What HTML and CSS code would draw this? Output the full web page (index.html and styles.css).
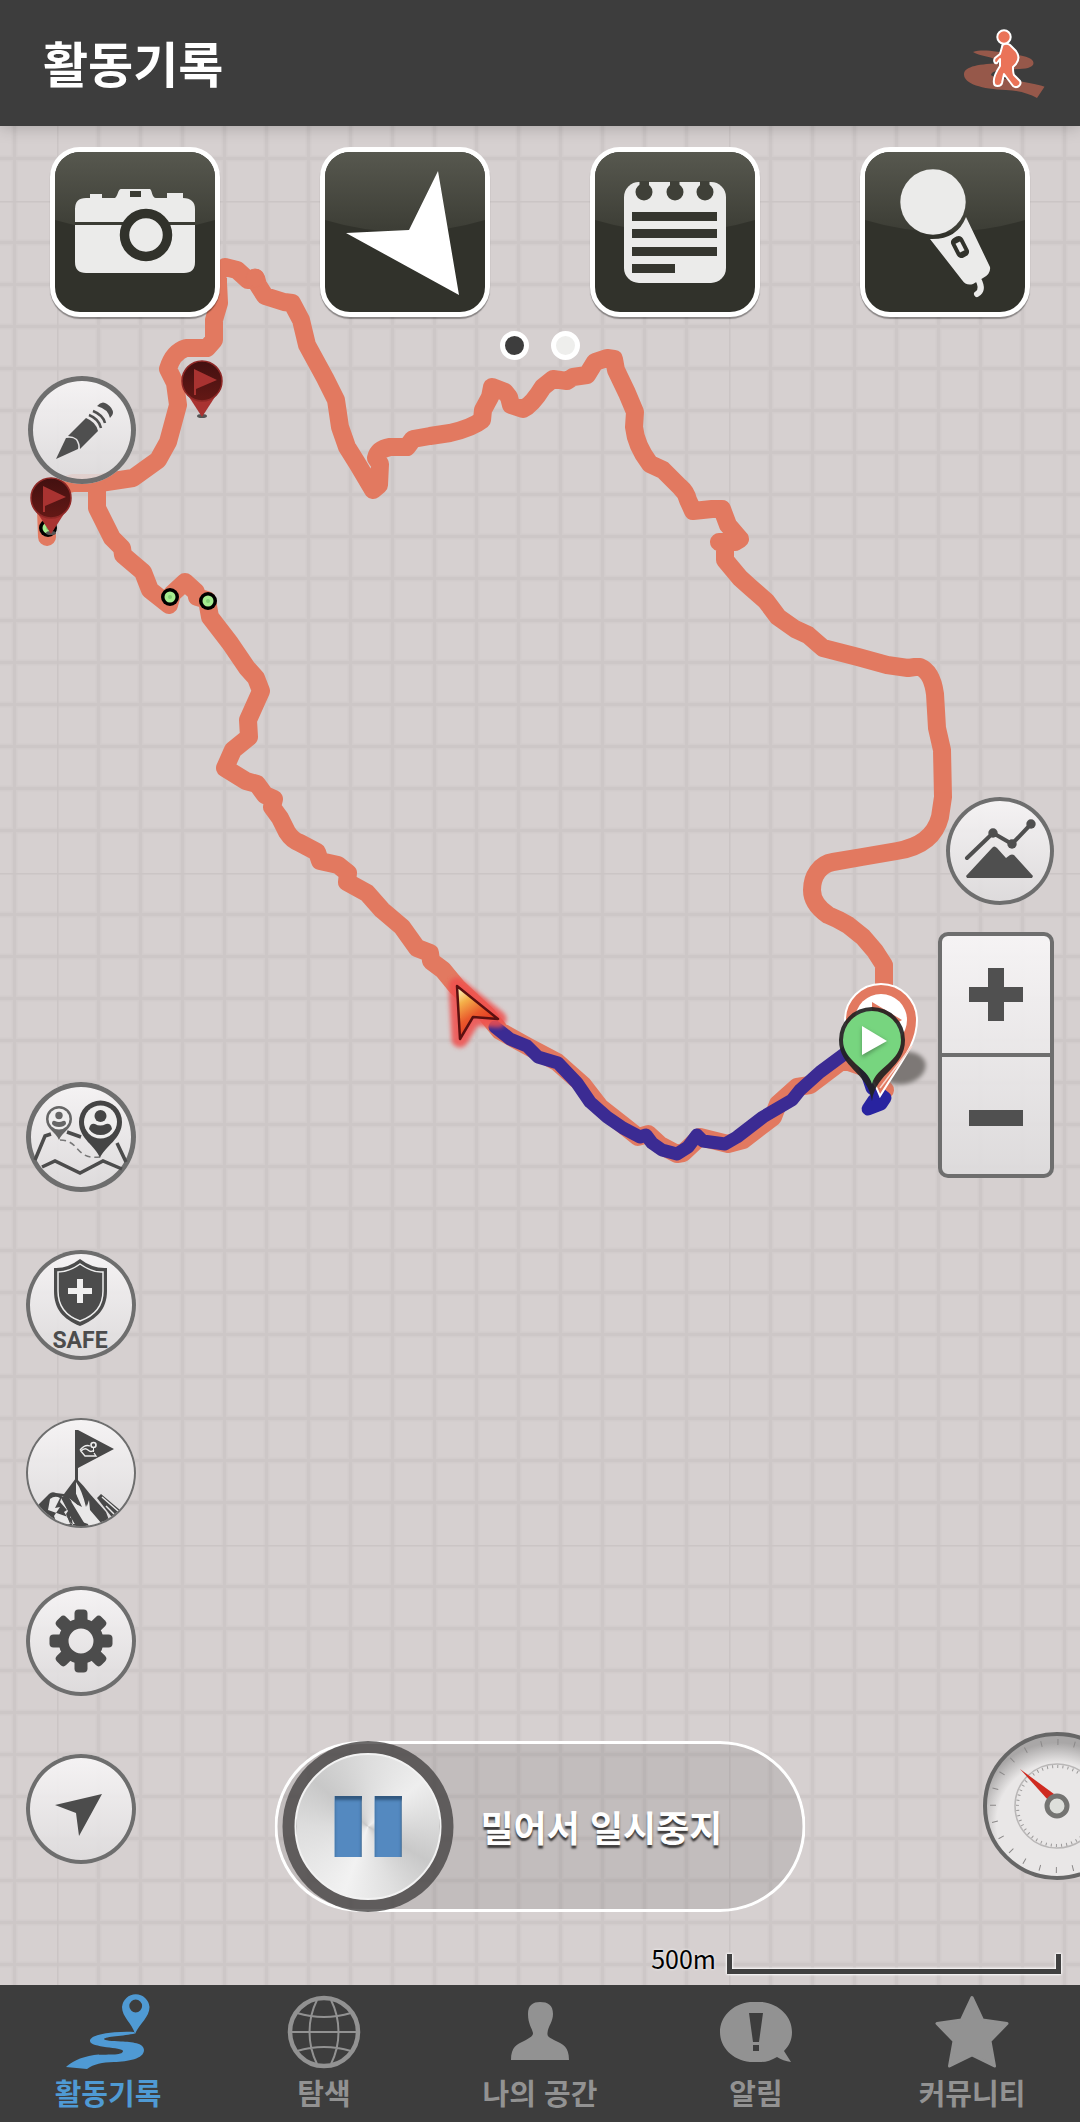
FILE: index.html
```html
<!DOCTYPE html>
<html lang="ko">
<head>
<meta charset="utf-8">
<meta name="viewport" content="width=device-width, initial-scale=1">
<title>활동기록</title>
<link rel="stylesheet" href="styles.css">
</head>
<body>
<header class="app-bar">
  <h1 class="app-title">활동기록</h1>
  <button class="activity-button" type="button" aria-label="걷기">
    <svg width="88" height="76" viewBox="0 0 88 76">
      <path fill="#96584a" d="M13 27C18 25 25 25.500 30 25.700C50 29 73.500 30 73.500 38C73.500 44 60 44.500 50 44C38 44 31 47 31 50C33 54 70 56 84.500 61.700L77 73C68 68 58 65.500 46 65C22 64 4 59 4 49.500C4 41 20 39 42 38C34 31 18 31 13 27Z"/>
      <g fill="#ea7358" stroke="#fff" stroke-width="2" stroke-linejoin="round">
        <path d="M42 22C42 18 48 18 50 20L56 26C59 30 59 35 56 39L53 42C53 45 53 48 54 50L60 56C62 60 57 64 53 61L44 49L42 58C41 62 34 62 34 58C33 53 36 47 40 41V34L37 38C35 39 33 36 35 33L40 29Z"/>
        <circle cx="44" cy="12" r="6.700"/>
      </g>
    </svg>
  </button>
</header>

<main class="map">
  <svg class="map-canvas" width="100%" height="100%" aria-hidden="true">
    <defs>
      <pattern id="tile" x="57" y="201" width="672" height="672" patternUnits="userSpaceOnUse">
        <rect width="672" height="672" fill="#d6d0d0"/>
        <path stroke="#d2cccc" stroke-width="6" d="M41.500 0V672M83.500 0V672M125.500 0V672M167.500 0V672M209.500 0V672M251.500 0V672M293.500 0V672M335.500 0V672M377.500 0V672M419.500 0V672M461.500 0V672M503.500 0V672M545.500 0V672M587.500 0V672M629.500 0V672M0 41.500H672M0 83.500H672M0 125.500H672M0 167.500H672M0 209.500H672M0 251.500H672M0 293.500H672M0 335.500H672M0 377.500H672M0 419.500H672M0 461.500H672M0 503.500H672M0 545.500H672M0 587.500H672M0 629.500H672"/>
        <path stroke="#cdc7c7" stroke-width="3" d="M41.500 0V672M83.500 0V672M125.500 0V672M167.500 0V672M209.500 0V672M251.500 0V672M293.500 0V672M335.500 0V672M377.500 0V672M419.500 0V672M461.500 0V672M503.500 0V672M545.500 0V672M587.500 0V672M629.500 0V672M0 41.500H672M0 83.500H672M0 125.500H672M0 167.500H672M0 209.500H672M0 251.500H672M0 293.500H672M0 335.500H672M0 377.500H672M0 419.500H672M0 461.500H672M0 503.500H672M0 545.500H672M0 587.500H672M0 629.500H672"/>
        <path stroke="#cbc5c5" stroke-width="3" d="M0 0H672M0 0V672"/>
      </pattern>
      <linearGradient id="cursor-fill" x1="0" y1="0" x2=".5" y2="1">
        <stop offset=".05" stop-color="#fff6c0"/><stop offset=".3" stop-color="#f4b04a"/><stop offset=".6" stop-color="#ea5a2c"/><stop offset="1" stop-color="#e0261c"/>
      </linearGradient>
      <linearGradient id="pin-fill" x1="0" y1="0" x2="0" y2="1">
        <stop offset="0" stop-color="#421010"/><stop offset="1" stop-color="#641815"/>
      </linearGradient>
      <filter id="glow" x="-30%" y="-30%" width="160%" height="160%"><feGaussianBlur stdDeviation="2"/></filter>
      <g id="flag-pin">
        <path fill="#a93331" d="M-20 5L0 36L20 5Z"/>
        <circle r="20" fill="url(#pin-fill)" stroke="#8f2826" stroke-width="1.500"/>
        <path fill="#a93331" d="M-8-12L15-1L-6 8V14H-8Z"/>
      </g>
      <g id="waypoint">
        <circle r="9" fill="#000"/><circle r="5.500" fill="#a6ec90"/><circle r="2" fill="#83cf78"/>
      </g>
    </defs>
    <g transform="translate(0 -126)">
      <rect y="126" width="100%" height="100%" fill="url(#tile)"/>
      <g fill="none" stroke="#e27960" stroke-width="18" stroke-linecap="round" stroke-linejoin="round">
        <path d="M884 1000V965L875 951L863 937L848 925Q838 919 828 915Q812 904 812 890C812 876 820 864 833 862L862 857L897 851Q933 845 940 817L943 797L942 750L937 728L935 694Q932 672 920 667L915 667L908 668L887 665L858 657L823 648L808 635L795 629L778 617L766 601L750 587L740 578L725 560V543L719 542L735 542L740 539L728 525L722 509L712 509L693 511L688 500Q686 492 680 487L663 470L650 464Q636 446 634 427L635 412L627 393L616 370L614 359L607 358L595 362L587 375L573 377L567 381L553 379L543 387Q532 405 523 409L511 405L509 397L505 392L492 387L490 397L483 410L482 420Q472 428 450 433L430 436L413 439L407 447L390 447Q378 449 376 458L380 464L379 485L373 490L357 463L347 447L340 427L336 400L325 378L307 345L301 320L292 303L284 302L265 296L258 285L256 278L248 280L237 270L225 267L218 273V283L219 303L214 320V340L207 348L186 348Q173 352 168 369L175 383L178 405L168 442L158 460L133 478L100 483L73 483Q50 488 46 510L47 537"/>
        <path d="M97 486V508L112 538L122 548L123 555L143 572L150 590L169 605L172 594L185 582L196 592L197 597L207 600L210 617L230 643L247 668L256 678L261 691L248 720L249 737L233 750L225 768L246 781L257 784L265 795L274 799L272 807L280 818L287 832Q292 840 300 843L317 852L320 861L338 865L348 873L347 882L367 893L382 910L402 927L417 948L430 953L431 961L443 970L457 987L487 1015L500 1031L527 1046L557 1062L583 1085L600 1107L623 1125L638 1137L648 1134L660 1145L677 1154L683 1153L700 1137L728 1144L743 1140L773 1117L778 1104L797 1087L810 1085L843 1060L866 1068L885 1090"/>
        <circle cx="255" cy="278" r="0.500"/>
      </g>
      <path fill="none" stroke="#3b2b93" stroke-width="13" stroke-linecap="round" stroke-linejoin="round" d="M495 1027L510 1039L527 1046L538 1057L558 1063L577 1083L590 1102L607 1117L623 1128L640 1137L646 1135L652 1143L662 1150L677 1154L688 1147L697 1135L703 1141L725 1144L737 1137L763 1117L792 1100L800 1090L820 1072L847 1052L862 1042"/>
      <path fill="none" stroke="#2823a0" stroke-width="13" stroke-linecap="round" stroke-linejoin="round" d="M862 1058L872 1088L885 1098L881 1104L868 1109L874 1100L884 1098"/>

      <use href="#waypoint" x="170" y="597"/>
      <use href="#waypoint" x="208" y="601"/>
      <use href="#waypoint" x="48" y="528"/>
      <ellipse cx="202" cy="416" rx="5" ry="2" fill="#555"/>
      <ellipse cx="51" cy="533" rx="5" ry="2" fill="#555"/>
      <use href="#flag-pin" x="202" y="381"/>
      <use href="#flag-pin" x="51" y="498"/>

      <ellipse cx="903" cy="1068" rx="23" ry="16" transform="rotate(-12 903 1068)" fill="#7d7876" filter="url(#glow)"/>
      <path fill="#e27960" stroke="#fff" stroke-width="2" d="M880 1096C868 1065 845 1050 845 1020A36 36 0 0 1 917 1020C917 1044 902 1060 880 1096Z"/>
      <path fill="none" stroke="#f8d8cf" stroke-width="1.500" d="M880 1088L912 1046"/>
      <circle cx="881" cy="1020" r="26" fill="#fff"/>
      <path fill="#e27960" d="M872 1002L902 1020L872 1038Z"/>
      <path fill="#222" fill-opacity=".92" d="M872 1101C868 1072 839 1068 839 1040A33 33 0 0 1 905 1040C905 1068 876 1072 872 1101Z"/>
      <path fill="#77d57f" d="M872 1084C868 1067 843 1062 843 1040A29 29 0 0 1 901 1040C901 1062 876 1067 872 1084Z"/>
      <path fill="#55955a" filter="url(#glow)" d="M862 1028L887 1042L862 1058Z"/>
      <path fill="#fff" d="M862 1026L887 1041L862 1055Z"/>

      <path d="M457 986L498 1019L473 1017L460 1039Z" fill="#f0504e" stroke="#f0504e" stroke-opacity=".85" stroke-width="17" stroke-linejoin="round" filter="url(#glow)"/>
      <path d="M457 986L498 1019L473 1017L460 1039Z" fill="url(#cursor-fill)" stroke="#5c1010" stroke-width="2.500" stroke-linejoin="round"/>
    </g>
  </svg>

  <svg class="shared-defs" width="0" height="0" aria-hidden="true">
    <defs>
      <linearGradient id="gloss-fill" x1="0" y1="0" x2="0" y2="1"><stop offset="0" stop-color="#57584f"/><stop offset="1" stop-color="#3c3d35"/></linearGradient>
      <path id="gloss" fill="url(#gloss-fill)" d="M0 0H160V68Q80 92 0 68Z"/>
    </defs>
  </svg>

  <div class="quick-actions">
    <button class="tile-button" type="button" aria-label="사진">
      <svg viewBox="0 0 160 160"><use href="#gloss"/>
        <path fill="#ebebea" d="M31 46H35V42H47V46H60C63 44 63 37 66 37H95C97 38 97 46 101 46H112V41H128V46C136 46 140 50 140 57V110Q140 121 129 121H31Q20 121 20 110V57Q20 46 31 46Z"/>
        <path fill="#3b3c34" d="M75 39H86V45H75ZM20 70H140V73H20Z"/>
        <circle cx="91" cy="83" r="21.500" fill="#ebebea" stroke="#31322b" stroke-width="9.500"/>
      </svg>
    </button>
    <button class="tile-button" type="button" aria-label="현재 위치">
      <svg viewBox="0 0 160 160"><use href="#gloss"/><path fill="#fff" d="M113 19L134 143L21 81L84 78Z"/></svg>
    </button>
    <button class="tile-button" type="button" aria-label="메모">
      <svg viewBox="0 0 160 160"><use href="#gloss"/>
        <rect x="29" y="30" width="102" height="101" rx="15" fill="#ebebea"/>
        <g fill="#3f4038"><circle cx="49" cy="40" r="8.500"/><circle cx="80" cy="40" r="8.500"/><circle cx="110" cy="40" r="8.500"/><path d="M44.500 29h9.500v10h-9.500zM75 29h9.500v10h-9.500zM105 29h9.500v10h-9.500z"/></g>
        <path fill="#35362f" d="M37 60h85v9H37zM37 77h85v9H37zM37 95h85v9H37zM37 112h43v9H37z"/>
      </svg>
    </button>
    <button class="tile-button" type="button" aria-label="음성 녹음">
      <svg viewBox="0 0 160 160"><use href="#gloss"/>
        <circle cx="68" cy="50" r="32.700" fill="#ebebea"/>
        <path fill="#ebebea" d="M101 65L125 115Q126 122 118 126L108 132Q101 134 97 128L65 87Q92 88 101 65Z"/>
        <path fill="none" stroke="#ebebea" stroke-width="6" stroke-linecap="round" d="M113 127Q119 138 112 142"/>
        <g transform="rotate(-27 95 95)"><rect x="88.500" y="84" width="13" height="22" rx="5" fill="#31322b"/><rect x="92.500" y="90" width="5" height="10" fill="#ebebea"/></g>
      </svg>
    </button>
  </div>
  <div class="pager" aria-hidden="true"><span class="dot dot-active"></span><span class="dot"></span></div>

  <button class="round-button edit-button" type="button" aria-label="편집">
    <svg viewBox="0 0 108 108"><g fill="#4f4f4f">
      <path d="M28 83L38 62Q45 61 48 64Q51 69 50 73Z"/>
      <path d="M40 60L58 42Q68 46 70 55L52 73Q52 67 49 63Q45 60 40 60Z"/>
      <path d="M69 30Q74 24 79 28Q85 32 85 37Q85 39 82 42Q80 33 69 30Z"/>
      <path fill="none" stroke="#4f4f4f" stroke-width="2.500" d="M61 39Q71 43 73 52M65 35Q75 39 77 47"/>
    </g></svg>
  </button>

  <div class="map-tools">
    <button class="round-button ring-heavy" type="button" aria-label="주변 사용자">
      <svg viewBox="0 0 110 110">
        <g fill="none" stroke="#4c4c4c" stroke-width="3.500"><path d="M9 78L19 54L25 52M41 50L55 55M91 61L100 80M16 85L29 79L54 91L77 79L96 87"/><path stroke="#777" stroke-width="1.500" stroke-dasharray="6 4" d="M34 58C54 58 49 78 74 75"/></g>
        <path fill="#666" d="M33 58C30 50 20 47 20 37A13 13 0 0 1 46 37C46 47 36 50 33 58Z"/><circle cx="33" cy="37" r="10.500" fill="#efeeee"/><circle cx="33" cy="33.500" r="3.700" fill="#666"/><path fill="#666" d="M26 42Q26 38 29 39Q33 41 37 39Q40 38 40 42Q38 45 33 45Q28 45 26 42Z"/>
        <path fill="#454545" d="M74 76C70 64 53 57 53 40A21.500 21.500 0 0 1 96 40C96 57 79 64 74 76Z"/><circle cx="74.500" cy="40" r="16.500" fill="#efeeee"/><circle cx="74.500" cy="34" r="6" fill="#454545"/><path fill="#454545" d="M63 47Q64 41 69 42Q74 45 80 42Q85 41 86 47Q82 53 74.500 53Q67 53 63 47Z"/>
      </svg>
    </button>
    <button class="round-button ring-medium" type="button">
      <svg viewBox="0 0 110 110">
        <path fill="#4c4c4c" d="M54 9Q67 19 81 18V41C81 59 71 69 54 76C37 69 28 59 28 41V18Q41 19 54 9Z"/>
        <path fill="none" stroke="#eee" stroke-width="1.500" d="M54 14Q67 23 77 22V41C77 57 68 66 54 71C40 66 32 57 32 41V22Q43 22 54 14Z"/>
        <path fill="#f0efef" d="M51 29h6v9h9v6h-9v9h-6v-9h-9v-6h9z"/>
        <text class="safe-label" x="54" y="98" text-anchor="middle">SAFE</text>
      </svg>
    </button>
    <button class="round-button ring-light" type="button" aria-label="정상 인증">
      <svg viewBox="0 0 110 110">
        <clipPath id="tool-clip"><circle cx="55" cy="55" r="53"/></clipPath>
        <path fill="#484848" d="M49 12H52L88 31L52 50V62H49Z"/>
        <path fill="none" stroke="#eee" stroke-width="1.300" d="M54 32Q59 26 64 28M54 32L59 38L70 38L68 35M55 33Q59 29 62 32T68 32"/><circle cx="67.500" cy="27" r="2.500" fill="none" stroke="#eee" stroke-width="1.600"/><path stroke="#eee" d="M67.500 29.500V34"/>
        <g clip-path="url(#tool-clip)">
          <path fill="#484848" d="M10 89L23 76Q26 73 30 75L38 76L50 60Q58 68 64 76L80 94L86 110H0V89Z"/>
          <path fill="#484848" d="M71 80L75 76L94 92L88 102Z"/><path stroke="#e9e8e8" stroke-width="1.500" d="M76 79L92 93M80 88L88 96"/>
          <path fill="#e9e8e8" d="M22 92L24 81Q29 77 34 80L29 90L34 89L28 98L31 106H52L45 96L47 108L38 94L41 92L34 84L36 78L46 84L56 89L50 76V64Q56 72 60 89L63 80L67 90L80 108H63L55 95L46 84L43 80L58 92L62 106Z"/>
          <path fill="#484848" d="M34 78L43 80L60 108H50L44 98L45 108L40 96L42 93ZM43 79L52 87L49 70L41 78ZM51 63L66 80L84 106H76L64 92L63 82L61 88L57 74Z"/>
        </g>
      </svg>
    </button>
    <button class="round-button ring-medium" type="button" aria-label="설정">
      <svg viewBox="0 0 110 110">
        <defs><rect id="tooth" x="48.500" y="23.500" width="13" height="16" rx="4"/></defs>
        <g fill="#4c4c4c"><use href="#tooth"/><use href="#tooth" transform="rotate(45 55 55)"/><use href="#tooth" transform="rotate(90 55 55)"/><use href="#tooth" transform="rotate(135 55 55)"/><use href="#tooth" transform="rotate(180 55 55)"/><use href="#tooth" transform="rotate(225 55 55)"/><use href="#tooth" transform="rotate(270 55 55)"/><use href="#tooth" transform="rotate(315 55 55)"/></g>
        <circle cx="55" cy="55" r="17.500" fill="none" stroke="#4c4c4c" stroke-width="10"/>
      </svg>
    </button>
    <button class="round-button ring-medium" type="button" aria-label="내 위치로">
      <svg viewBox="0 0 110 110"><path fill="#4c4c4c" d="M76 40L53 82L50 59L29 51Z"/></svg>
    </button>
  </div>

  <div class="view-controls">
    <button class="round-button chart-button" type="button" aria-label="고도 그래프">
      <svg viewBox="0 0 108 108"><path fill="none" stroke="#4f4f4f" stroke-width="4" stroke-linecap="round" d="M21 61L47 36L66 47L85 27"/><g fill="#4f4f4f"><circle cx="47" cy="36" r="4.700"/><circle cx="66" cy="47" r="4.700"/><circle cx="85" cy="27" r="4.700"/><path d="M20 79L46 51Q48 48 51 51L60 61L64 58Q66 57 68 58L87 79L86 81H21Z"/></g></svg>
    </button>
    <div class="zoom-control">
      <button class="zoom-button" type="button" aria-label="확대"><svg width="56" height="56" viewBox="0 0 56 56"><path fill="#505050" d="M20 1H36V20H55V35H36V54H20V35H1V20H20Z"/></svg></button>
      <button class="zoom-button" type="button" aria-label="축소"><svg width="56" height="56" viewBox="0 0 56 56"><path fill="#505050" d="M1 22H55V38H1Z"/></svg></button>
    </div>
  </div>

  <button class="pause-slider" type="button">
    <span class="pause-knob"><span class="pause-face"><span class="pause-bar"></span><span class="pause-bar"></span></span></span>
    <span class="pause-label">밀어서 일시중지</span>
  </button>

  <button class="gauge-button" type="button" aria-label="속도계">
    <svg viewBox="0 0 148 148">
      <defs><radialGradient id="dial" cx=".5" cy=".62" r=".56"><stop offset=".75" stop-color="#e9e7e7"/><stop offset="1" stop-color="#a9a7a7"/></radialGradient></defs>
      <circle cx="74" cy="74" r="72" fill="url(#dial)" stroke="#666" stroke-width="4"/>
      <circle cx="74" cy="74" r="64" fill="none" stroke="#8a8888" stroke-width="6" stroke-dasharray="1 15.755"/>
      <circle cx="74" cy="74" r="42" fill="none" stroke="#b9b7b7" stroke-width="1.500"/>
      <circle cx="74" cy="74" r="39.500" fill="none" stroke="#9a9898" stroke-width="3" stroke-dasharray="1 4.170"/>
      <path fill="#cf2a20" d="M37 37L71 62L65 68Z"/>
      <circle cx="74" cy="74" r="10" fill="#dddfdb" stroke="#747472" stroke-width="5"/>
    </svg>
  </button>

  <div class="scale"><span class="scale-label">500m</span><span class="scale-bar"></span></div>
</main>

<nav class="tab-bar" aria-label="주 메뉴">
  <a class="tab tab-active" href="#record" aria-current="page">
    <svg viewBox="0 0 84 84"><path fill-rule="evenodd" d="M69 44C66 33 56 27 56 17A13.800 13.800 0 0 1 83.500 17C83.500 27 74 33 69 44ZM63.300 16A6.400 6.400 0 1 0 76.100 16A6.400 6.400 0 1 0 63.300 16Z"/><path d="M68 42C55 41 24 43 24 51C24 58 57 57 57 61C57 66 40 64 28 65C14 67 4 73 0 77L21 79C28 74 36 72.500 48 72C62 71.500 78 69 78 60C78 53 66 52 55 51.500C46 51 38 50.500 38 49C39 46.500 58 46 69 43.500Z"/></svg>
    <span>활동기록</span>
  </a>
  <a class="tab" href="#explore">
    <svg viewBox="0 0 84 84"><g fill="none" stroke="currentColor" stroke-width="2"><circle cx="42" cy="42" r="34" stroke-width="4.500"/><path d="M35 10C25 30 25 54 35 74M49 10C59 30 59 54 49 74M8 42H76M15 23Q42 31 69 23M15 61Q42 53 69 61"/></g></svg>
    <span>탐색</span>
  </a>
  <a class="tab" href="#my">
    <svg viewBox="0 0 84 84"><path d="M13 70C13 57 19 54 26 51C33 47 35 46 35 43C34 38 30 34 30 24C30 15 35 12 42 12C50 12 55 15 55 24C55 32 50 36 49.500 43C49 47 52 48 58 51C65 54 71 57 71 70Z"/></svg>
    <span>나의 공간</span>
  </a>
  <a class="tab" href="#alerts">
    <svg viewBox="0 0 84 84"><path fill-rule="evenodd" d="M36 12H48C66 14 78 27 78 42C78 50 75 56 70 61L77 72Q69 71 63 67C58 70 52 72 48 72H36C18 70 6 57 6 42C6 27 18 14 36 12ZM35 23H49L45 52H39ZM39 55H45V61H39Z"/></svg>
    <span>알림</span>
  </a>
  <a class="tab" href="#community">
    <svg viewBox="0 0 84 84"><path stroke="currentColor" stroke-width="3" stroke-linejoin="round" d="M42 7.500L52.500 30L77 33.500L60 51L64.500 76L42 65L19.500 76L24 51L7 33.500L31.500 30Z"/></svg>
    <span>커뮤니티</span>
  </a>
</nav>
</body>
</html>
```
FILE: styles.css
```css
* {
  box-sizing: border-box;
}

body {
  margin: 0;
  min-height: 100vh;
  display: flex;
  flex-direction: column;
  font-family: "Noto Sans CJK KR", "Noto Sans", sans-serif;
  background: #3d3d3d;
}

button {
  margin: 0;
  padding: 0;
  border: 0;
  background: none;
  font: inherit;
  color: inherit;
  cursor: pointer;
}

svg {
  display: block;
}

.app-bar {
  position: relative;
  z-index: 1;
  display: flex;
  align-items: center;
  justify-content: space-between;
  height: 126px;
  padding: 0 32px 0 43px;
  background: #3d3d3d;
  color: #fff;
  box-shadow: 0 0 16px rgba(0, 0, 0, 0.25);
}

.app-title {
  margin: 0;
  padding-bottom: 3px;
  font-size: 49px;
  line-height: 72px;
  font-weight: 700;
}

.map {
  position: relative;
  flex: 1;
  min-height: 1500px;
  overflow: hidden;
  background: #d6d0d0;
}

.map-canvas,
.shared-defs {
  position: absolute;
  top: 0;
  left: 0;
}

.quick-actions {
  position: relative;
  display: grid;
  grid-template-columns: repeat(4, 1fr);
  justify-items: center;
  padding-top: 21px;
}

.tile-button {
  width: 170px;
  height: 170px;
  border: 5px solid #fff;
  border-radius: 30px;
  overflow: hidden;
  background: #31322b;
  box-shadow: 0 2px 1px rgba(0, 0, 0, 0.35);
}

.pager {
  position: relative;
  display: flex;
  justify-content: center;
  gap: 22px;
  padding-top: 14px;
}

.dot {
  width: 29px;
  height: 29px;
  border: 5px solid #fff;
  border-radius: 50%;
  background: #eeeeec;
}

.dot-active {
  background: #3d3d3d;
}

.round-button {
  width: 110px;
  height: 110px;
  border-radius: 50%;
  background: linear-gradient(rgba(247, 245, 246, 0.95), rgba(222, 220, 221, 0.85));
  box-shadow: inset 0 0 0 4px #6e6e6e;
}

.ring-heavy {
  box-shadow: inset 0 0 0 5px #6e6e6e;
}

.ring-light {
  box-shadow: inset 0 0 0 2px #6e6e6e;
}

.edit-button,
.chart-button {
  width: 108px;
  height: 108px;
}

.edit-button {
  position: absolute;
  left: 28px;
  top: 250px;
  box-shadow: inset 0 0 0 5px #6e6e6e;
}

.map-tools {
  position: absolute;
  left: 26px;
  bottom: 121px;
  display: flex;
  flex-direction: column;
  gap: 58px;
}

.safe-label {
  font-family: Roboto, sans-serif;
  font-size: 23px;
  font-weight: 700;
  fill: #4c4c4c;
}

.view-controls {
  position: absolute;
  top: 671px;
  right: 26px;
  display: flex;
  flex-direction: column;
  align-items: flex-end;
  gap: 27px;
}

.zoom-control {
  display: flex;
  flex-direction: column;
  width: 116px;
  border: 4px solid #6e6e6e;
  border-radius: 10px;
  background: linear-gradient(rgba(247, 245, 246, 0.95), rgba(222, 220, 221, 0.9));
}

.zoom-button {
  display: flex;
  align-items: center;
  justify-content: center;
  height: 117px;
}

.zoom-button + .zoom-button {
  height: 121px;
  border-top: 4px solid #6e6e6e;
}

.pause-slider {
  position: absolute;
  left: 50%;
  bottom: 73px;
  transform: translateX(-50%);
  display: flex;
  align-items: center;
  gap: 27px;
  width: 531px;
  height: 171px;
  padding-left: 8px;
  border-radius: 86px;
  background: rgba(0, 0, 0, 0.09);
  box-shadow: inset 0 0 0 3px #fff;
}

.pause-knob {
  display: flex;
  padding: 12px;
  border-radius: 50%;
  background: rgba(70, 67, 67, 0.8);
}

.pause-face {
  display: flex;
  align-items: center;
  justify-content: center;
  gap: 13px;
  width: 147px;
  height: 147px;
  border: 2px solid #f2f2f2;
  border-radius: 50%;
  background: conic-gradient(#ddd, #eee 50deg, #c8c8c8 120deg, #e0e0e0 160deg, #f2f2f2 200deg, #ddd 270deg, #c8c8c8 310deg, #d2d2d2 335deg, #ddd);
}

.pause-bar {
  width: 27px;
  height: 61px;
  background: #5489c0;
  box-shadow: inset 0 4px 3px #31587f;
}

.pause-label {
  padding-bottom: 2px;
  font-size: 36px;
  font-weight: 700;
  color: #fff;
  text-shadow: 0 3px 2px rgba(0, 0, 0, 0.7);
}

.gauge-button {
  position: absolute;
  right: -51px;
  bottom: 105px;
  width: 148px;
  height: 148px;
}

.scale {
  position: absolute;
  right: 19px;
  bottom: 11px;
  display: flex;
  align-items: flex-end;
  gap: 11px;
}

.scale-label {
  font-size: 25px;
  line-height: 32px;
  color: #000;
  text-shadow: 0 0 3px #fff;
}

.scale-bar {
  width: 334px;
  height: 20px;
  border: 5px solid #404040;
  border-top: 0;
  filter: drop-shadow(0 0 1px #fff) drop-shadow(0 0 1px #fff);
}

.tab-bar {
  display: grid;
  grid-template-columns: repeat(5, 1fr);
  height: 137px;
  background: #3d3d3d;
}

.tab {
  display: flex;
  flex-direction: column;
  align-items: center;
  padding-top: 5px;
  font-size: 29px;
  line-height: 36px;
  font-weight: 700;
  color: #929292;
  text-decoration: none;
}

.tab svg {
  width: 84px;
  height: 84px;
  fill: currentColor;
}

.tab-active {
  color: #4f9ad4;
}
```
